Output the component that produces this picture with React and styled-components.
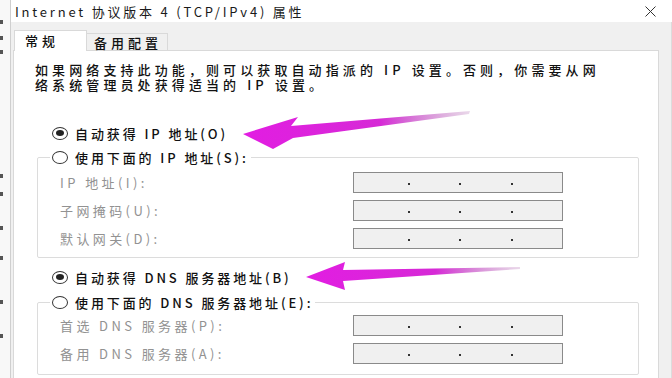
import React from "react";
import styled, { createGlobalStyle } from "styled-components";

const Global = createGlobalStyle`
  html, body { margin: 0; padding: 0; }
  body {
    width: 672px;
    height: 378px;
    overflow: hidden;
    background: #f0f0f0;
    font-family: "Noto Sans CJK SC", "Noto Sans", sans-serif;
  }
`;

const Page = styled.div`
  position: relative;
  display: flex;
  width: 672px;
  height: 378px;
  overflow: hidden;
`;

const Edge = styled.div`
  width: 10px;
  background: #f8f8f8;
  border-right: 1px solid #cfcfcf;
  display: flex;
  flex-direction: column;
  align-items: flex-start;
`;

const Mark = styled.span`
  display: block;
  width: 3px;
  height: 4px;
  margin-top: ${(p) => p.$gap}px;
  background: #555;
`;

const Window = styled.div`
  flex: 1;
  display: flex;
  flex-direction: column;
  background: #f0f0f0;
`;

const TitleBar = styled.div`
  height: 22px;
  background: #fff;
  display: flex;
  align-items: center;
  justify-content: space-between;
  padding: 0 16px 0 4px;
  font-size: 13px;
  letter-spacing: 2.8px;
  color: #1a1a1a;
  white-space: nowrap;
`;

const Body = styled.div`
  flex: 1;
  display: flex;
  flex-direction: column;
  padding: 8px 13px 0 2px;
  box-shadow: inset -9px 0 0 -8px #dcdcdc;
`;

const Tabs = styled.div`
  display: flex;
  align-items: flex-end;
  height: 20px;
  margin-left: 1px;
  position: relative;
  z-index: 1;
`;

const Tab = styled.div`
  box-sizing: border-box;
  width: ${(p) => (p.$active ? 73 : 81)}px;
  height: ${(p) => (p.$active ? 21 : 17)}px;
  margin-bottom: ${(p) => (p.$active ? -1 : 0)}px;
  background: ${(p) => (p.$active ? "#fff" : "#f0f0f0")};
  border: 1px solid #d9d9d9;
  border-bottom: none;
  border-left: ${(p) => (p.$active ? "1px solid #d9d9d9" : "none")};
  padding-left: ${(p) => (p.$active ? 10 : 7)}px;
  font-size: 13px;
  font-weight: 500;
  line-height: ${(p) => (p.$active ? 19 : 17)}px;
  letter-spacing: 4px;
  color: #111;
  white-space: nowrap;
`;

const Panel = styled.div`
  flex: 1;
  background: #fff;
  border: 1px solid #d9d9d9;
  border-bottom: none;
  padding: 11px 19px 0 21px;
  display: flex;
  flex-direction: column;
`;

const Desc = styled.div`
  display: flex;
  flex-direction: column;
`;

const DescLine = styled.span`
  display: block;
  height: 15px;
  font-size: 13px;
  font-weight: 500;
  line-height: 15px;
  letter-spacing: 4.1px;
  color: #111;
  white-space: nowrap;
`;

const RadioRow = styled.div`
  display: flex;
  align-items: center;
  gap: 7px;
  height: 18px;
  margin: ${(p) => p.$top || 0}px 0 0 ${(p) => p.$inset || 0}px;
  font-size: 13px;
  font-weight: 500;
  letter-spacing: 2.9px;
  color: #111;
  white-space: nowrap;
`;

const Circle = styled.span`
  position: relative;
  box-sizing: border-box;
  width: 16px;
  height: 13px;
  border: 1px solid #333;
  border-radius: 50%;
  background: #fff;
  flex: none;
  &::after {
    content: "";
    display: ${(p) => (p.$checked ? "block" : "none")};
    position: absolute;
    left: 3px;
    top: 2.5px;
    width: 8px;
    height: 6px;
    border-radius: 50%;
    background: #222;
  }
`;

const Group = styled.fieldset`
  margin: ${(p) => p.$top}px 0 0 2px;
  padding: ${(p) => p.$padTop}px 0 ${(p) => p.$padBottom}px 12px;
  border: 1px solid #dcdcdc;
  border-radius: 2px;
  min-width: 0;
`;

const Legend = styled.legend`
  padding: 0 2px;
  margin: 0;
`;

const Fields = styled.div`
  display: grid;
  grid-template-columns: 293px 210px;
  row-gap: ${(p) => p.$gap}px;
  align-items: center;
  margin-left: 10px;
`;

const Label = styled.span`
  font-size: 13px;
  letter-spacing: 3.4px;
  color: #929292;
  white-space: nowrap;
`;

const AddrBox = styled.div`
  box-sizing: border-box;
  height: 21px;
  background: #f0f0f0;
  border: 1px solid #8a8a8a;
  display: flex;
  justify-content: space-evenly;
  align-items: center;
  padding-left: 4px;
`;

const Dot = styled.span`
  width: 2px;
  height: 2px;
  background: #333;
  margin-top: 3px;
`;

const Overlay = styled.svg`
  position: absolute;
  left: 0;
  top: 0;
  pointer-events: none;
`;

function Radio({ checked, label, top, inset }) {
  return (
    <RadioRow $top={top} $inset={inset}>
      <Circle $checked={checked} />
      <span>{label}</span>
    </RadioRow>
  );
}

function Address() {
  return (
    <AddrBox>
      <Dot />
      <Dot />
      <Dot />
    </AddrBox>
  );
}

function FieldGroup({ legend, labels, top, padTop, padBottom, gap }) {
  return (
    <Group $top={top} $padTop={padTop} $padBottom={padBottom}>
      <Legend>
        <Radio label={legend} />
      </Legend>
      <Fields $gap={gap}>
        {labels.map((l) => (
          <React.Fragment key={l}>
            <Label>{l}</Label>
            <Address />
          </React.Fragment>
        ))}
      </Fields>
    </Group>
  );
}

export default function App() {
  return (
    <Page>
      <Global />
      <Edge>
        <Mark $gap={20} />
        <Mark $gap={12} />
        <Mark $gap={10} />
        <Mark $gap={120} />
        <Mark $gap={14} />
        <Mark $gap={30} />
        <Mark $gap={26} />
        <Mark $gap={40} />
        <Mark $gap={30} />
      </Edge>
      <Window>
        <TitleBar>
          <span>Internet 协议版本 4 (TCP/IPv4) 属性</span>
          <svg width="11" height="11" viewBox="0 0 11 11">
            <path d="M0.5 0.5 L10.5 10.5 M10.5 0.5 L0.5 10.5" stroke="#333" strokeWidth="1" />
          </svg>
        </TitleBar>
        <Body>
          <Tabs>
            <Tab $active>常规</Tab>
            <Tab>备用配置</Tab>
          </Tabs>
          <Panel>
            <Desc>
              <DescLine>如果网络支持此功能，则可以获取自动指派的 IP 设置。否则，你需要从网</DescLine>
              <DescLine>络系统管理员处获得适当的 IP 设置。</DescLine>
            </Desc>
            <Radio checked label="自动获得 IP 地址(O)" top={32} inset={17} />
            <FieldGroup
              top={6}
              padTop={6}
              padBottom={8}
              gap={7}
              legend="使用下面的 IP 地址(S):"
              labels={["IP 地址(I):", "子网掩码(U):", "默认网关(D):"]}
            />
            <Radio checked label="自动获得 DNS 服务器地址(B)" top={10} inset={17} />
            <FieldGroup
              top={7}
              padTop={4}
              padBottom={10}
              gap={7}
              legend="使用下面的 DNS 服务器地址(E):"
              labels={["首选 DNS 服务器(P):", "备用 DNS 服务器(A):"]}
            />
          </Panel>
        </Body>
      </Window>
      <Overlay width="672" height="378" viewBox="0 0 672 378">
        <defs>
          <linearGradient id="fade1" x1="243" y1="0" x2="472" y2="0" gradientUnits="userSpaceOnUse">
            <stop offset="0" stopColor="#e21de2" />
            <stop offset="0.6" stopColor="#d62ad6" />
            <stop offset="1" stopColor="#b070b0" stopOpacity="0.25" />
          </linearGradient>
          <linearGradient id="fade2" x1="306" y1="0" x2="522" y2="0" gradientUnits="userSpaceOnUse">
            <stop offset="0" stopColor="#e21de2" />
            <stop offset="0.6" stopColor="#d62ad6" />
            <stop offset="1" stopColor="#b070b0" stopOpacity="0.25" />
          </linearGradient>
        </defs>
        <polygon
          points="243,134 298,117 291,126 470,111 469,114 293,138 273,149"
          fill="url(#fade1)"
        />
        <polygon
          points="306,277 345,262 343,270 520,267 520,269 343,281 345,290"
          fill="url(#fade2)"
        />
      </Overlay>
    </Page>
  );
}
